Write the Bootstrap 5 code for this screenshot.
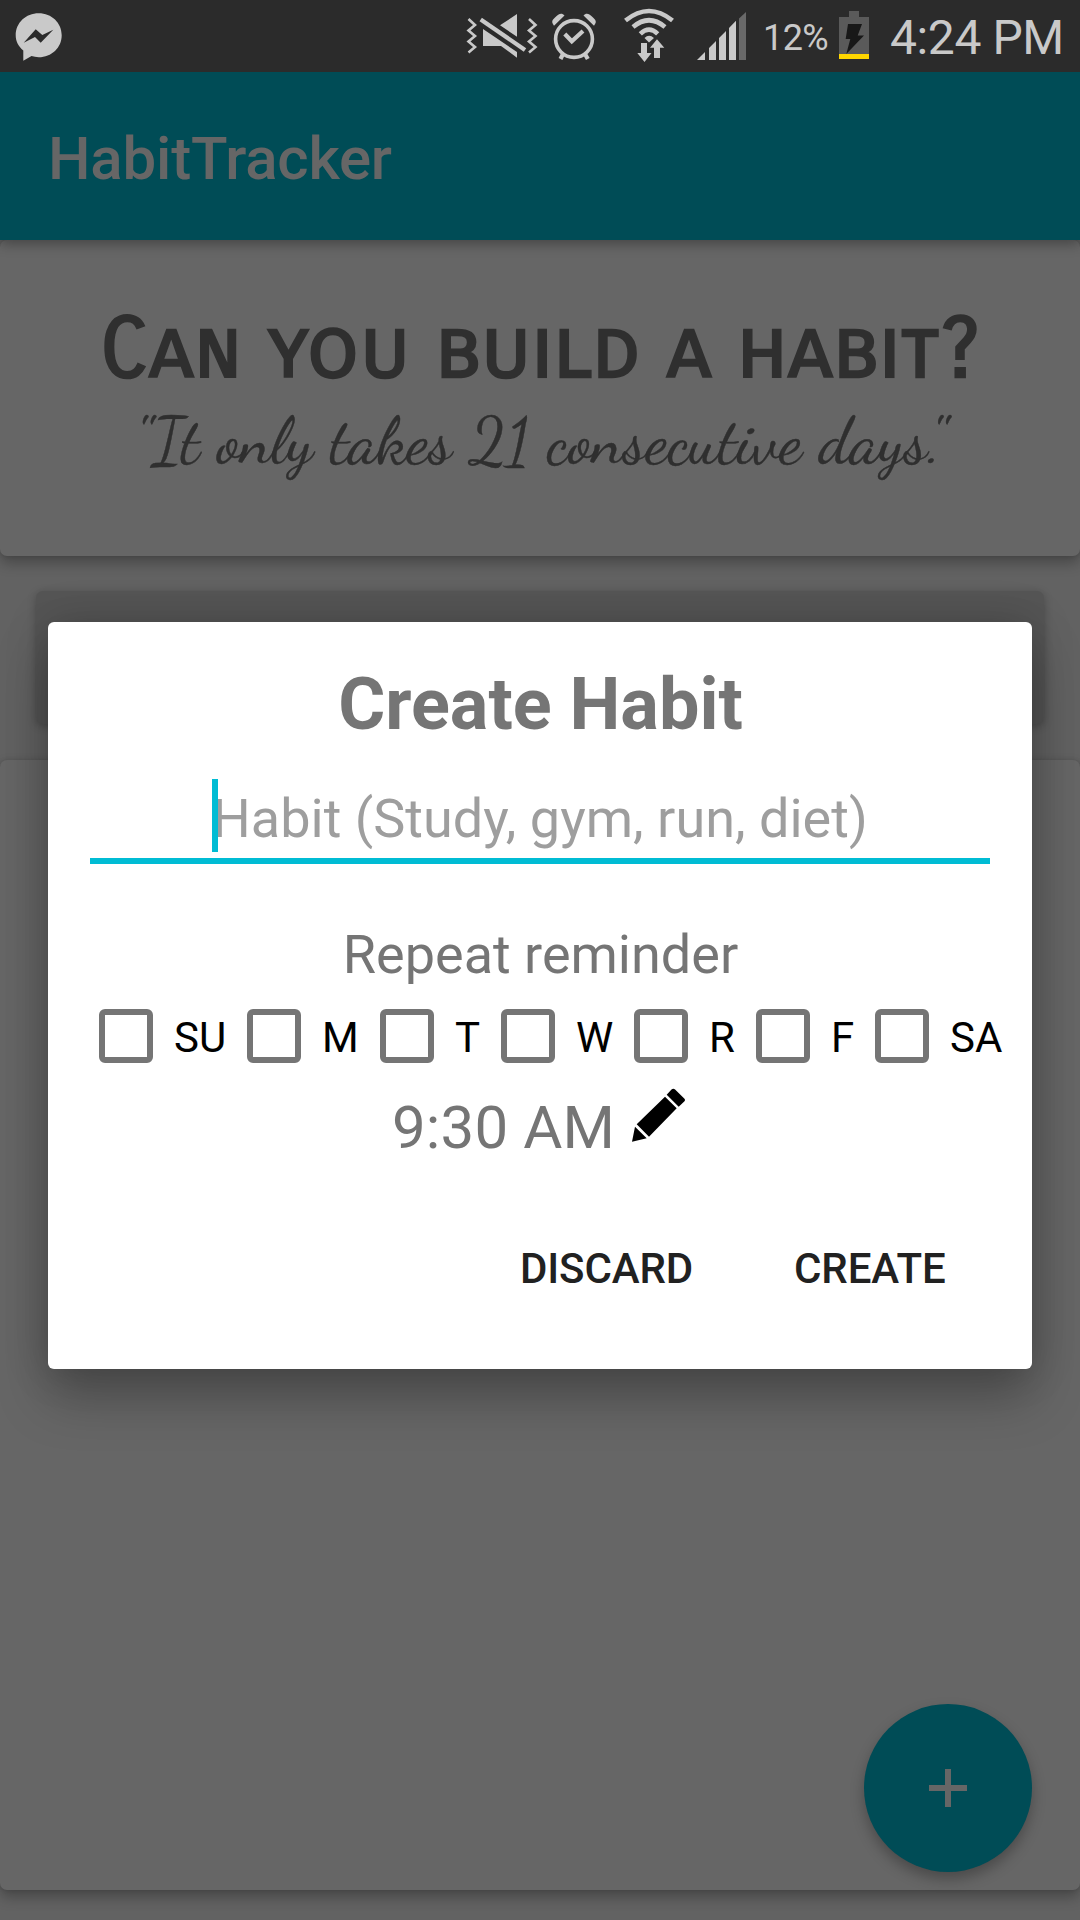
<!DOCTYPE html>
<html lang="en">
<head>
<meta charset="utf-8">
<title>HabitTracker</title>
<meta name="viewport" content="width=device-width, initial-scale=1">
<link rel="stylesheet" href="https://cdn.jsdelivr.net/npm/bootstrap@5.3.0/dist/css/bootstrap.min.css">
<style>
body{font-family:Roboto,"Liberation Sans",sans-serif;background:#626262;width:1080px;height:1920px;overflow:hidden;color:#2f2f2f}
svg{display:block;flex:none}
.statusbar{height:72px;background:#2b2b2b;color:#c9c9c9;position:relative;z-index:3}
.statusbar svg{fill:#c9c9c9}
.pct{font-size:36px;line-height:72px;width:75px;padding-top:2px;letter-spacing:-.6px}
.clock{font-size:48px;line-height:72px;width:190px;padding-top:2px;white-space:nowrap;letter-spacing:-.4px}
.appbar{height:168px;background:#004c56;color:#666;font-size:60px;font-weight:500;line-height:1.1;padding:5px 0 0 48px;letter-spacing:-.2px;box-shadow:0 4px 12px rgba(0,0,0,.32);position:relative;z-index:2}
.panel{background:#666;border-radius:7px;box-shadow:0 7px 14px rgba(0,0,0,.28),0 0 4px rgba(0,0,0,.12)}
.intro{height:316px}
.headline{font-family:"Carrois Gothic SC",Roboto,sans-serif;font-size:84px;font-weight:700;line-height:86px;padding:67px 0 0;margin:0;height:151px;white-space:nowrap}
.quote{font-family:"Dancing Script","Liberation Serif",serif;font-size:66px;line-height:74px;padding:13px 0 0;white-space:nowrap;-webkit-text-stroke:.4px #2f2f2f}
.addbtn{height:133px;margin:35px 36px 36px;background:#555;border-radius:7px;box-shadow:0 2px 8px rgba(0,0,0,.25)}
.list{height:1130px}
.fab{right:48px;top:1704px;width:168px;height:168px;background:#004c56;box-shadow:0 7px 14px rgba(0,0,0,.28);z-index:3}
.scrim{z-index:5;padding:622px 48px 0}
.dialog{height:747px;background:#fff;border-radius:6px;padding:41px 42px 0;color:#757575;box-shadow:0 28px 52px rgba(0,0,0,.27),0 0 44px rgba(0,0,0,.17)}
.dialog h1{font-size:72px;line-height:84px;font-weight:700;margin:0 0 -1px;padding-left:1px}
.field{height:118px;border-bottom:6px solid #00bcd4;padding-top:41px;font-size:54px;line-height:64px;color:#9e9e9e;position:relative}
.caret{left:122px;top:33px;width:6px;height:73px;background:#00bcd4}
.rep{font-size:54px;line-height:64px;margin-top:59px;padding-left:1px}
.days{margin:22px -30px 0 9px;height:54px;color:#000;font-size:42px;line-height:54px}
.days label{flex:none}
.days i{width:54px;height:54px;border:6px solid #757575;border-radius:6px;margin-right:21px;flex:none}
.days span{padding-top:2px}
.time{font-size:60px;line-height:70px;margin-top:30px;padding-left:302px}
.time span{width:230px;white-space:nowrap;letter-spacing:.15px}
.acts{margin-top:81px;font-size:42px;line-height:50px;font-weight:500;color:#212121;padding-left:430px}
.acts span{width:274px;flex:none;letter-spacing:-.1px}
.acts span+span{width:auto}
</style>
<script src="https://cdn.jsdelivr.net/npm/bootstrap@5.3.0/dist/js/bootstrap.bundle.min.js"></script>
</head>
<body class="position-relative">
<div class="statusbar d-flex">
  <svg width="72" height="72" viewBox="0 0 72 72"><path d="M38.7 13.2c12.900 0 23 9.600 23 22s-10.100 22-23 22c-2.600 0-5-.4-7.200-1.100L23.300 60.700V50.500C18.500 46.600 15.700 41.300 15.700 35.200c0-12.400 10.100-22 23-22z"/><path fill="#2b2b2b" d="M23.700 42.700 35.700 29.300l6.600 5.700 11-5.300-12.600 13-5.700-5.700z"/></svg>
  <svg class="ms-auto" width="92" height="72" viewBox="460 0 92 72"><path fill="none" stroke="#c9c9c9" stroke-width="2.600" d="M468.500 19l6.500 6-6.500 5.500 6.500 5.500-6.500 5.500 6.500 5.500-6.500 5.500M529 19l6.500 6-6.500 5.500 6.500 5.500-6.500 5.500 6.500 5.500-6.500 5.500"/><path stroke="#c9c9c9" stroke-width="4.200" d="M480.700 19.500 525 50"/><path d="M500 25.300 517 14v22.700zM483 29l34 23v5.700L501 46h-18z"/></svg>
  <svg width="65" height="72" viewBox="552 0 65 72"><g fill="none" stroke="#c9c9c9"><circle cx="574" cy="39" r="18.400" stroke-width="3.600"/><path stroke-width="4.200" d="M564.800 34l7 7.300L583 31M563 54l-2.500 5M585 54l2.800 5"/></g><path d="M554 25.700C551.500 22.500 551.500 20.500 555 17.500 558.500 14 561.500 12 564.500 15.500zM594 25.700C596.500 22.500 596.500 20.500 593 17.500 589.500 14 586.500 12 583.500 15.500z"/></svg>
  <svg width="70" height="72" viewBox="617 0 70 72"><g fill="none" stroke="#c9c9c9" stroke-width="4.600"><path d="M625.500 20.500Q649 1.500 672.500 20.500M633 27Q649 13.500 665 27M640.300 33.800Q649 25.500 657.700 33.800"/></g><path d="M644.500 38q4.500-4.500 9.500 0l-5 4.500zM641 43h6v10h4.500l-7 9-7.200-9h3.700zM657 39.300l7.300 8.500H660V58h-6V47.800h-4z"/></svg>
  <svg width="76" height="72" viewBox="687 0 76 72"><path d="M697 60l8-8v8zM709 60V48l7-7v19zM719 60V38l7-7v29zM729 60V28l7-7.300V60z"/><path fill="#696969" d="M739 60V18.500l7-6.500v48z"/></svg>
  <div class="pct">12%</div>
  <svg width="52" height="72" viewBox="838 0 52 72"><path fill="#5a5a5a" d="M849 11h10v6h10v37h-30V17h10z"/><path fill="#ffd600" d="M839 54h30v5h-30z"/><path fill="#181818" d="M848 24h14l-4.300 11.500h6.300L846.300 54l4-15h-4.600z"/></svg>
  <div class="clock">4:24 PM</div>
</div>
<header class="appbar d-flex align-items-center">HabitTracker</header>
<section class="panel intro">
  <h2 class="headline text-center">Can you build a habit?</h2>
  <div class="quote text-center">"It only takes 21 consecutive days."</div>
</section>
<div class="addbtn"></div>
<section class="panel list"></section>
<div class="fab position-absolute rounded-circle d-flex align-items-center justify-content-center">
  <svg width="38" height="38"><path fill="#666" d="M16 0h6v16h16v6H22v16h-6V22H0v-6h16z"/></svg>
</div>
<div class="scrim position-absolute top-0 start-0 w-100">
  <div class="dialog">
    <h1 class="text-center">Create Habit</h1>
    <div class="field text-center">Habit (Study, gym, run, diet)<div class="caret position-absolute"></div></div>
    <div class="rep text-center">Repeat reminder</div>
    <div class="days d-flex">
      <label class="d-flex" style="width:148px"><i></i><span>SU</span></label>
      <label class="d-flex" style="width:133px"><i></i><span>M</span></label>
      <label class="d-flex" style="width:121px"><i></i><span>T</span></label>
      <label class="d-flex" style="width:133px"><i></i><span>W</span></label>
      <label class="d-flex" style="width:122px"><i></i><span>R</span></label>
      <label class="d-flex" style="width:119px"><i></i><span>F</span></label>
      <label class="d-flex"><i></i><span>SA</span></label>
    </div>
    <div class="time d-flex"><span>9:30 AM</span>
      <svg width="80" height="60" viewBox="622 1093 80 60" overflow="visible"><path d="M671.500 1089.500q1.800-1.500 3.600 0l9.400 9.200q1.200 1.300 0 2.500l-5.800 5.500-12-12zM665 1096.700l11.700 11.600-27.700 28.400-12.300-12.400zM635 1126.700l11.700 11.600-14.700 3.400z"/></svg>
    </div>
    <div class="acts d-flex"><span>DISCARD</span><span>CREATE</span></div>
  </div>
</div>
</body>
</html>
